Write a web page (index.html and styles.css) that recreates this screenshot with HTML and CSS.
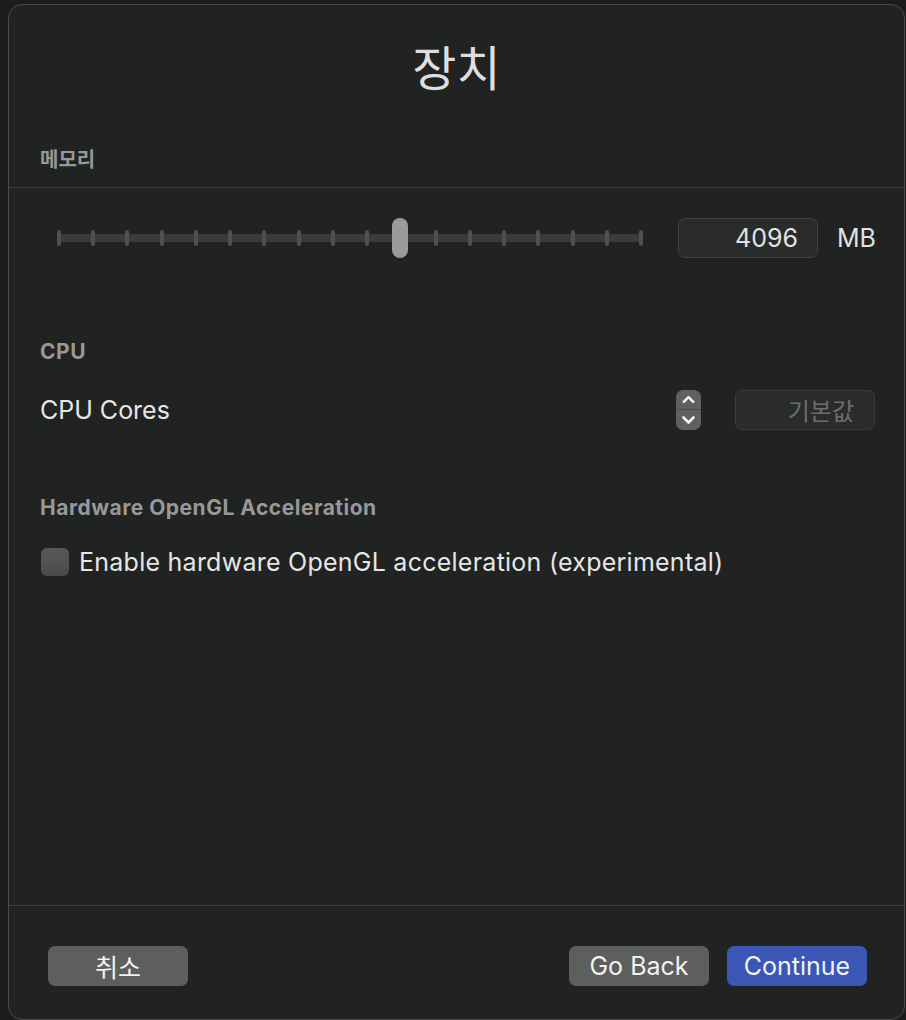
FILE: index.html
```html
<!DOCTYPE html>
<html lang="ko">
<head>
  <meta charset="UTF-8" />
  <title>장치</title>
  <link rel="stylesheet" href="styles.css">
</head>
<body>
  <div class="window">
    <h1 class="title">장치</h1>

    <div class="section-label memory-label">메모리</div>
    <div class="divider"></div>

    <div class="memory-row">
      <div class="slider">
        <div class="ticks">
          <span></span><span></span><span></span><span></span><span></span><span></span>
          <span></span><span></span><span></span><span></span><span></span><span></span>
          <span></span><span></span><span></span><span></span><span></span><span></span>
        </div>
        <div class="thumb" style="left: 335px;"></div>
      </div>
      <div class="field value-field">4096</div>
      <span class="unit">MB</span>
    </div>

    <div class="section-label cpu-label">CPU</div>
    <div class="cpu-row">
      <span class="row-text">CPU Cores</span>
      <div class="stepper">
        <svg class="chev" width="25" height="20" viewBox="0 0 25 20">
          <path d="M7.5 12.5 L12.5 7.5 L17.5 12.5" fill="none" stroke="#f4f4f4" stroke-width="2.6" stroke-linecap="round" stroke-linejoin="round"/>
        </svg>
        <svg class="chev" width="25" height="20" viewBox="0 0 25 20">
          <path d="M7.5 7.5 L12.5 12.5 L17.5 7.5" fill="none" stroke="#f4f4f4" stroke-width="2.6" stroke-linecap="round" stroke-linejoin="round"/>
        </svg>
      </div>
      <div class="field default-field">기본값</div>
    </div>

    <div class="section-label gl-label">Hardware OpenGL Acceleration</div>
    <label class="check-row">
      <span class="checkbox"></span>
      <span class="row-text check-text">Enable hardware OpenGL acceleration (experimental)</span>
    </label>

    <div class="footer">
      <button class="btn">취소</button>
      <div class="spacer"></div>
      <button class="btn">Go Back</button>
      <button class="btn btn-primary">Continue</button>
    </div>
  </div>
</body>
</html>
```

FILE: styles.css
```css
* {
  box-sizing: border-box;
  margin: 0;
  padding: 0;
}

body {
  font-family: "Inter", "Noto Sans CJK KR", sans-serif;
  background: #1b1c1d;
  color: #e4e4e4;
  height: 1020px;
  overflow: hidden;
  padding: 4px 0 0 8px;
}

.window {
  width: 897px;
  height: 1016px;
  background: #212222;
  border: 1px solid #4b4c4c;
  border-radius: 14px;
  display: flex;
  flex-direction: column;
}

.title {
  font-family: "Noto Sans CJK KR", sans-serif;
  font-weight: 400;
  font-size: 48px;
  line-height: 56px;
  text-align: center;
  color: #dedede;
  margin-top: 32px;
}

.section-label {
  font-size: 21px;
  line-height: 24px;
  font-weight: 700;
  letter-spacing: 0.5px;
  color: #989898;
  padding-left: 31px;
}

.memory-label {
  font-family: "Noto Sans CJK KR", sans-serif;
  font-size: 20px;
  letter-spacing: 0;
  margin-top: 54px;
}

.divider {
  height: 1px;
  background: #3b3c3c;
  margin-top: 16px;
}

.memory-row {
  display: flex;
  align-items: center;
  height: 40px;
  margin-top: 30px;
  padding-left: 48px;
}

.slider {
  position: relative;
  width: 586px;
  height: 40px;
  display: flex;
  align-items: center;
}

.ticks {
  width: 100%;
  height: 16px;
  display: flex;
  justify-content: space-between;
  align-items: center;
  background: linear-gradient(#3a3c3c, #3a3c3c) center / 100% 8px no-repeat;
}

.ticks span {
  width: 4px;
  height: 16px;
  border-radius: 2px;
  background: #4f5151;
}

.thumb {
  position: absolute;
  top: 0;
  width: 16px;
  height: 40px;
  border-radius: 8px;
  background: #9b9b9b;
}

.field {
  width: 140px;
  height: 40px;
  border-radius: 7px;
  background: #2a2b2b;
  border: 1px solid #3f4040;
  text-align: right;
  font-size: 25px;
  line-height: 38px;
}

.value-field {
  margin-left: 35px;
  padding-right: 19px;
  color: #e2e2e2;
}

.unit {
  font-size: 25px;
  margin-left: 19px;
  color: #e2e2e2;
}

.cpu-label {
  margin-top: 82px;
}

.cpu-row {
  display: flex;
  align-items: center;
  height: 40px;
  margin-top: 26px;
  padding-left: 31px;
}

.row-text {
  font-size: 25px;
  color: #e6e6e6;
}

.check-text {
  letter-spacing: 0.25px;
}

.stepper {
  width: 25px;
  height: 40px;
  border-radius: 7px;
  background: #5f6060;
  margin-left: auto;
  display: flex;
  flex-direction: column;
}

.stepper .chev:first-child {
  border-bottom: 1px solid #4b4c4c;
}

.default-field {
  margin-left: 34px;
  margin-right: 29px;
  padding-right: 20px;
  color: #6c6d6d;
  border-color: #3a3b3b;
  font-family: "Noto Sans CJK KR", sans-serif;
  font-size: 24px;
}

.gl-label {
  margin-top: 66px;
}

.check-row {
  display: flex;
  align-items: center;
  gap: 10px;
  margin-top: 27px;
  padding-left: 32px;
}

.checkbox {
  width: 28px;
  height: 28px;
  border-radius: 6px;
  background: linear-gradient(#575858, #4a4b4b);
}

.footer {
  margin-top: auto;
  border-top: 1px solid #3b3c3c;
  display: flex;
  gap: 18px;
  padding: 40px 37px 33px 39px;
}

.spacer {
  flex: 1;
}

.btn {
  width: 140px;
  height: 40px;
  border: none;
  border-radius: 7px;
  background: #5d5e5e;
  color: #f2f2f2;
  font-family: "Inter", "Noto Sans CJK KR", sans-serif;
  font-size: 25px;
}

.btn-primary {
  background: #3a57b6;
}
```
